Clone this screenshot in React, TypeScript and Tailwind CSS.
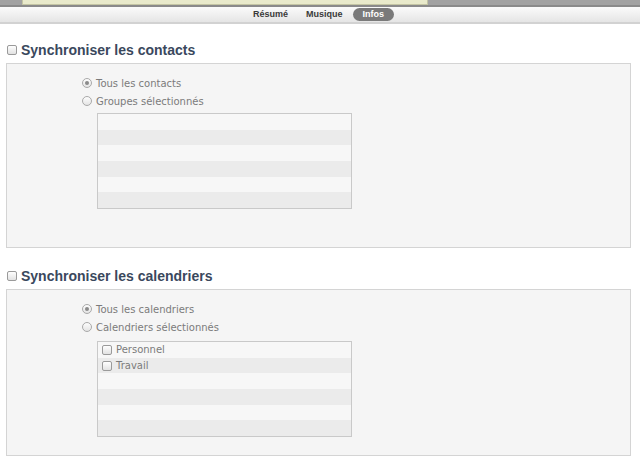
import React from "react";

const BODY_FONT = { fontFamily: '"DejaVu Sans", "Liberation Sans", sans-serif' };
const TITLE_FONT = { fontFamily: '"Liberation Sans", Arial, sans-serif' };

function Radio({ checked = false }: { checked?: boolean }) {
  return (
    <span className="flex h-[10px] w-[10px] shrink-0 items-center justify-center rounded-full border border-[#a9a9a9] bg-gradient-to-b from-[#fdfdfd] to-[#e4e4e4]">
      {checked ? <span className="h-[4px] w-[4px] rounded-full bg-[#8a8a8a]" /> : null}
    </span>
  );
}

function SmallBox({ className = "" }: { className?: string }) {
  return (
    <span
      className={`block shrink-0 rounded-[2px] border border-[#9a9a9a] bg-gradient-to-b from-[#fefefe] to-[#e2e2e2] ${className}`}
    />
  );
}

function RadioRow({ label, checked }: { label: string; checked?: boolean }) {
  return (
    <div className="flex h-[18px] items-center gap-[4px] text-[10px] text-[#7b7b7b]">
      <Radio checked={checked} />
      <span>{label}</span>
    </div>
  );
}

function ListBox({ items }: { items: string[] }) {
  const rows = [0, 1, 2, 3, 4, 5];
  return (
    <div className="ml-[15px] flex h-[96px] w-[255px] flex-col border border-[#c9c9c9]">
      {rows.map((i) => (
        <div
          key={i}
          className={`flex flex-1 items-center gap-[4px] pl-[4px] text-[10px] text-[#7b7b7b] ${
            i % 2 === 0 ? "bg-[#f7f7f7]" : "bg-[#ebebeb]"
          }`}
        >
          {items[i] ? (
            <>
              <SmallBox className="h-[10px] w-[10px]" />
              <span>{items[i]}</span>
            </>
          ) : null}
        </div>
      ))}
    </div>
  );
}

function Section({
  title,
  allLabel,
  selectedLabel,
  items,
  listGap,
  bottomPad,
}: {
  title: string;
  allLabel: string;
  selectedLabel: string;
  items: string[];
  listGap: string;
  bottomPad: string;
}) {
  return (
    <section>
      <div className="mb-[5px] flex h-[16px] items-center gap-[4px] pl-[7px]">
        <SmallBox className="h-[10px] w-[10px]" />
        <h2 className="text-[14px] font-bold leading-[16px] text-[#3a485d]" style={TITLE_FONT}>
          {title}
        </h2>
      </div>
      <div className={`ml-[6px] w-[625px] border border-[#d4d4d4] bg-[#f5f5f5] pl-[75px] pt-[10px] ${bottomPad}`}>
        <RadioRow label={allLabel} checked />
        <RadioRow label={selectedLabel} />
        <div className={listGap}>
          <ListBox items={items} />
        </div>
      </div>
    </section>
  );
}

export default function App() {
  return (
    <div className="h-[461px] w-[640px] overflow-hidden bg-white" style={BODY_FONT}>
      <div className="h-[5px] bg-[#a2a2a2] pl-[22px]">
        <div className="h-full w-[406px] border-x border-b border-[#c4c5a4] bg-[#e9eacb]" />
      </div>
      <div className="h-[2px] bg-[#8a8a8a]" />
      <div
        className="flex h-[17px] items-center justify-center gap-[10px] border-b-2 border-[#d2d2d2] bg-gradient-to-b from-[#fbfbfb] to-[#e5e5e5] pl-[7px] text-[9px] font-bold text-[#3a3a3a]"
        style={TITLE_FONT}
      >
        <span className="mr-[8px]">Résumé</span>
        <span>Musique</span>
        <span className="flex h-[13px] items-center rounded-full bg-[#7a7a7a] px-[10px] text-white">Infos</span>
      </div>

      <div className="pt-[18px]">
        <Section
          title="Synchroniser les contacts"
          allLabel="Tous les contacts"
          selectedLabel="Groupes sélectionnés"
          items={[]}
          listGap="mt-[3px]"
          bottomPad="pb-[38px]"
        />
        <div className="mt-[20px]">
          <Section
            title="Synchroniser les calendriers"
            allLabel="Tous les calendriers"
            selectedLabel="Calendriers sélectionnés"
            items={["Personnel", "Travail"]}
            listGap="mt-[5px]"
            bottomPad="pb-[18px]"
          />
        </div>
      </div>
    </div>
  );
}
